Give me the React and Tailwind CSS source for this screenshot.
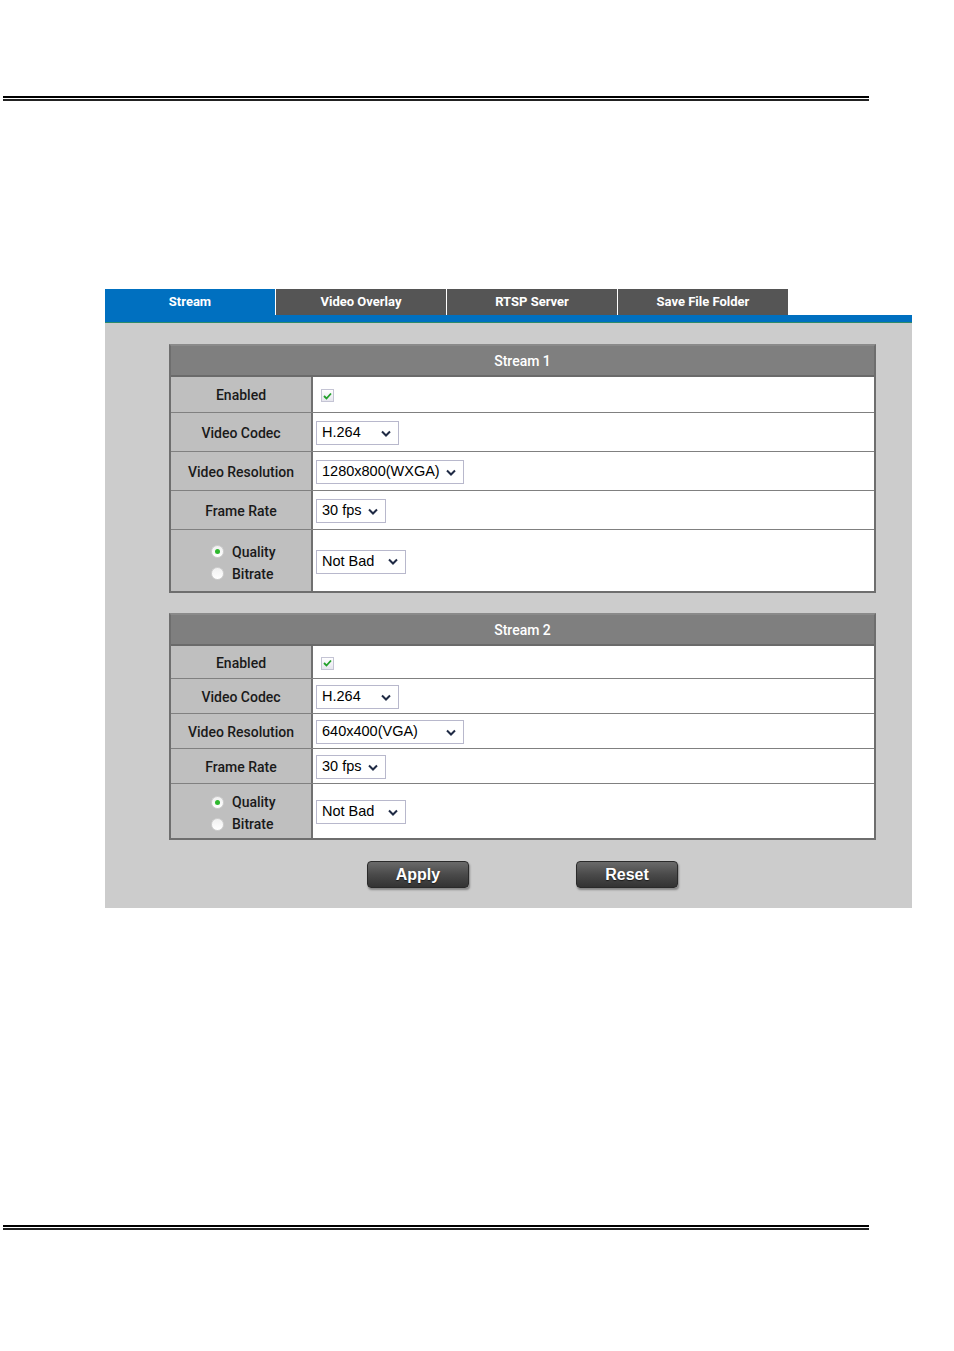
import React from 'react';

const font = { fontFamily: '"Liberation Sans", Arial, sans-serif' };
const labelFont = 'font-[Roboto,"Liberation_Sans",sans-serif] font-medium text-[14px] text-[#1a1a1a]';

function Chevron() {
  return (
    <svg width="10" height="7" viewBox="0 0 10 7" className="shrink-0">
      <path d="M1 1.5 L5 5.5 L9 1.5" fill="none" stroke="#1f2a44" strokeWidth="2" />
    </svg>
  );
}

function Select({ value, width }) {
  return (
    <div
      className="h-[24px] mt-[2px] flex items-center justify-between pl-[5px] pr-[7px] bg-white border border-[#b8b8cc] text-[14.5px] text-black"
      style={{ width }}
    >
      <span>{value}</span>
      <Chevron />
    </div>
  );
}

function Check() {
  return (
    <div className="w-[13px] h-[13px] border border-[#c4c4d4] bg-gradient-to-b from-white to-[#e6e6ee] flex items-center justify-center">
      <svg width="9" height="8" viewBox="0 0 9 8">
        <path d="M1 4 L3.5 6.5 L8 1.5" fill="none" stroke="#22a02a" strokeWidth="1.8" />
      </svg>
    </div>
  );
}

function Radio({ on }) {
  return (
    <div className="w-[13px] h-[13px] rounded-full border border-[#d0d0d0] bg-gradient-to-b from-[#f0f0f0] to-white flex items-center justify-center">
      {on && <div className="w-[5px] h-[5px] rounded-full bg-[#2eb82e]" />}
    </div>
  );
}

function Row({ label, h, children }) {
  return (
    <div className="flex border-b border-[#808080]" style={{ height: h }}>
      <div className={`w-[142px] shrink-0 bg-[#bfbfbf] border-r-2 border-[#707070] flex items-center justify-center pt-[2px] ${labelFont}`}>
        {label}
      </div>
      <div className="flex-1 bg-white flex items-center pl-[3px]">{children}</div>
    </div>
  );
}

function StreamTable({ title, res, rh, qh }) {
  return (
    <div className="border-2 border-[#6e6e6e] border-t-[#8a8a8a]">
      <div className="h-[31px] bg-[#7f7f7f] border-b-2 border-[#6a6a6a] flex items-center justify-center pt-[2px] text-white text-[14px] font-medium font-[Roboto,sans-serif]">
        {title}
      </div>
      <Row label="Enabled" h={rh[0]}>
        <div className="ml-[5px] mt-[2px]"><Check /></div>
      </Row>
      <Row label="Video Codec" h={rh[1]}>
        <Select value="H.264" width={83} />
      </Row>
      <Row label="Video Resolution" h={rh[1]}>
        <Select value={res} width={148} />
      </Row>
      <Row label="Frame Rate" h={rh[1]}>
        <Select value="30 fps" width={70} />
      </Row>
      <div className="flex" style={{ height: qh }}>
        <div className={`w-[142px] shrink-0 bg-[#bfbfbf] border-r-2 border-[#707070] flex flex-col justify-center gap-[2px] pl-[40px] pt-[4px] leading-[20px] ${labelFont}`}>
          <div className="flex items-center gap-[8px]"><Radio on />Quality</div>
          <div className="flex items-center gap-[8px]"><Radio />Bitrate</div>
        </div>
        <div className="flex-1 bg-white flex items-center pl-[3px]">
          <Select value="Not Bad" width={90} />
        </div>
      </div>
    </div>
  );
}

function Rule() {
  return (
    <div className="w-[866px] ml-[3px] flex flex-col gap-[1px]">
      <div className="h-[2px] bg-black" />
      <div className="h-[2px] bg-[#222]" />
    </div>
  );
}

function Btn({ children }) {
  return (
    <button className="w-[102px] h-[27px] rounded-[4px] border border-[#2a2a2a] bg-gradient-to-b from-[#6a6a6a] via-[#4a4a4a] to-[#333] text-white text-[16px] font-bold shadow-[1px_2px_2px_rgba(0,0,0,0.35)] [text-shadow:0_1px_1px_rgba(0,0,0,0.6)]">
      {children}
    </button>
  );
}

export default function App() {
  const tabs = ['Stream', 'Video Overlay', 'RTSP Server', 'Save File Folder'];
  return (
    <div className="w-[954px] h-[1351px] bg-white" style={font}>
      <div className="pt-[96px]">
        <Rule />
      </div>

      <div className="mt-[188px] ml-[105px] w-[807px]">
        {/* Tabs */}
        <div className="flex gap-[1px] h-[26px]">
          {tabs.map((t, i) => (
            <div
              key={t}
              className={`w-[170px] flex items-center justify-center text-white text-[13px] font-bold font-[Roboto,sans-serif] ${i === 0 ? 'bg-[#0070c0]' : 'bg-[#555555]'}`}
            >
              {t}
            </div>
          ))}
        </div>
        <div className="h-[8px] bg-[#0070c0] border-b border-[#2e8a6a]" />

        {/* Panel */}
        <div className="bg-[#cccccc] pt-[21px] pb-[20px] pl-[64px] pr-[36px]">
          <StreamTable title="Stream 1" res="1280x800(WXGA)" rh={[36, 39]} qh={61} />
          <div className="h-[20px]" />
          <StreamTable title="Stream 2" res="640x400(VGA)" rh={[33, 35]} qh={54} />
          <div className="flex justify-center gap-[107px] mt-[21px]">
            <Btn>Apply</Btn>
            <Btn>Reset</Btn>
          </div>
        </div>
      </div>

      <div className="mt-[317px]">
        <Rule />
      </div>
    </div>
  );
}
